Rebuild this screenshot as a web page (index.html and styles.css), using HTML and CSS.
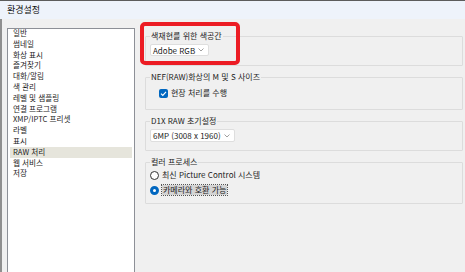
FILE: index.html
```html
<!DOCTYPE html>
<html lang="ko">
<head>
  <meta charset="UTF-8">
  <title>환경설정</title>
  <link rel="stylesheet" href="styles.css">
</head>
<body>

  <div class="window">
    <div class="titlebar">환경설정</div>
    <div class="content">
      <ul class="nav">
        <li>일반</li>
        <li>썸네일</li>
        <li>화상 표시</li>
        <li>즐겨찾기</li>
        <li>대화/알림</li>
        <li>색 관리</li>
        <li>레벨 및 샘플링</li>
        <li>연결 프로그램</li>
        <li>XMP/IPTC 프리셋</li>
        <li>라벨</li>
        <li>표시</li>
        <li class="selected">RAW 처리</li>
        <li>웹 서비스</li>
        <li>저장</li>
      </ul>

      <div class="panel">
        <fieldset class="group group-space">
          <legend>색재현를 위한 색공간</legend>
          <div class="select select-short">
            <span>Adobe RGB</span>
            <svg class="chevron" width="6" height="4" viewBox="0 0 6 4"><polyline points="0.5,0.5 3,3 5.5,0.5" fill="none" stroke="#888" stroke-width="0.8"/></svg>
          </div>
        </fieldset>

        <fieldset class="group group-size">
          <legend>NEF(RAW)화상의 M 및 S 사이즈</legend>
          <label class="option">
            <span class="checkbox">
              <svg width="9" height="9" viewBox="0 0 9 9"><polyline points="2,4.6 3.8,6.4 7,2.8" fill="none" stroke="#fff" stroke-width="1.1"/></svg>
            </span>
            현장 처리를 수행
          </label>
        </fieldset>

        <fieldset class="group group-d1x">
          <legend>D1X RAW 초기설정</legend>
          <div class="select select-long">
            <span>6MP (3008 x 1960)</span>
            <svg class="chevron" width="6" height="4" viewBox="0 0 6 4"><polyline points="0.5,0.5 3,3 5.5,0.5" fill="none" stroke="#888" stroke-width="0.8"/></svg>
          </div>
        </fieldset>

        <fieldset class="group group-process">
          <legend>컬러 프로세스</legend>
          <label class="option">
            <span class="radio"></span>
            최신 Picture Control 시스템
          </label>
          <label class="option">
            <span class="radio checked"></span>
            <span class="focused">카메라와 호환 가능</span>
          </label>
        </fieldset>

        <div class="callout"></div>
      </div>
    </div>
  </div>

</body>
</html>
```

FILE: styles.css
```css
html, body {
  margin: 0;
  padding: 0;
}
body {
  font-family: "Noto Sans CJK KR", "Noto Sans", sans-serif;
  font-size: 8px;
  color: #1c1c1c;
  background-color: #f0f0f0;
  width: 465px;
  height: 272px;
  overflow: hidden;
}
.window {
  height: 272px;
}
.titlebar {
  border-top: 1px solid #5c5c5c;
  background-color: #eef3fb;
  height: 18px;
  line-height: 18px;
  padding-left: 7px;
  font-size: 9px;
  color: #111;
}
.content {
  display: flex;
  gap: 10px;
  height: 253px;
  padding: 9px 2px 0 5px;
  border-left: 2px solid #8f8f8f;
  box-sizing: border-box;
  overflow: hidden;
}
.nav {
  list-style: none;
  margin: 0;
  padding: 0;
  width: 128px;
  height: 244px;
  background: #fff;
  border: 1px solid #8d9097;
  border-bottom: none;
  box-sizing: border-box;
  flex-shrink: 0;
  font-size: 7.6px;
}
.nav li {
  margin: 0 2px;
  padding: 0 1px 0 3px;
  height: 10.8px;
  line-height: 10.8px;
}
.nav li:first-child {
  margin-top: -1px;
}
.nav li.selected {
  background-color: #e6e5dc;
}
.panel {
  position: relative;
  flex: 1;
  margin-top: 3px;
}
.group {
  margin: 0 0 6px 0;
  padding: 0 4px;
  border: 1px solid #dcdcdc;
  border-radius: 1px;
  min-width: 0;
}
.group legend {
  padding: 0 1px;
  height: 10px;
  line-height: 10px;
}
.group-space {
  padding-top: 3px;
  padding-bottom: 9px;
}
.group-size {
  padding-top: 6px;
  padding-bottom: 11px;
}
.group-d1x {
  padding-top: 3px;
  padding-bottom: 8px;
}
.group-process {
  padding-top: 3px;
  padding-bottom: 8px;
}
.select {
  display: flex;
  align-items: center;
  justify-content: space-between;
  box-sizing: border-box;
  height: 12px;
  padding: 0 4px 0 2px;
  background: #fff;
  border: 1px solid #dedede;
  border-radius: 2px;
}
.select-short {
  width: 59px;
}
.select-long {
  width: 85px;
  height: 13px;
}
.option {
  display: flex;
  align-items: center;
  gap: 3px;
  height: 10px;
  line-height: 10px;
}
.option + .option {
  margin-top: 5px;
}
.group-size .option {
  padding-left: 9px;
}
.checkbox {
  width: 9px;
  height: 9px;
  border-radius: 2px;
  background-color: #0067c0;
  display: flex;
}
.radio {
  width: 9px;
  height: 9px;
  border-radius: 50%;
  border: 1px solid #333;
  box-sizing: border-box;
  background: #fff;
}
.radio.checked {
  border: 3px solid #0067c0;
}
.focused {
  background-color: #d4d4d4;
  outline: 1px dotted #555;
  padding: 0 1px;
  line-height: 10px;
}
.callout {
  position: absolute;
  left: -5px;
  top: -9px;
  width: 100px;
  height: 43px;
  box-sizing: border-box;
  border: 4px solid #ec1c24;
  border-radius: 5px;
}
```
